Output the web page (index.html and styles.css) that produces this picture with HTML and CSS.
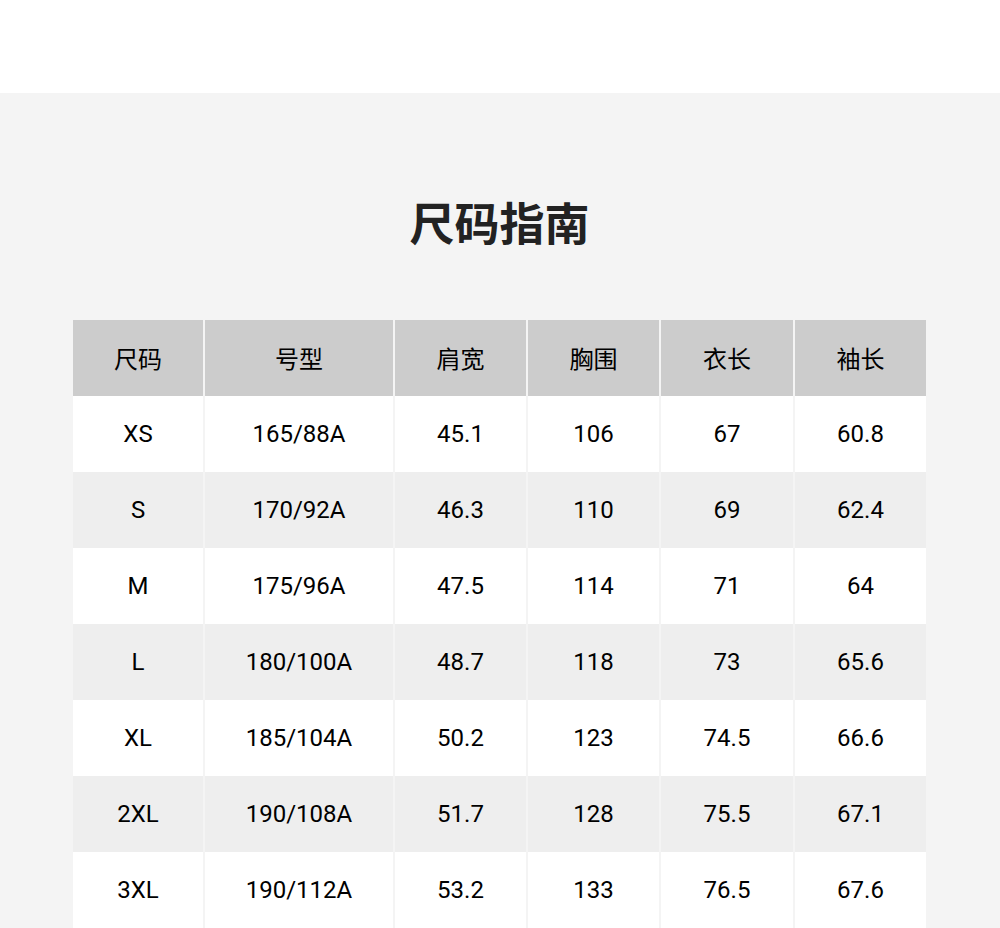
FILE: index.html
```html
<!DOCTYPE html>
<html lang="zh-CN">
<head>
<meta charset="utf-8">
<title>尺码指南</title>
<link rel="stylesheet" href="styles.css">
</head>
<body>
<div class="top"></div>
<section class="guide">
  <h1 class="title">尺码指南</h1>
  <table class="size-table">
    <colgroup>
      <col class="c1"><col class="c2"><col class="c3"><col class="c4"><col class="c5"><col class="c6">
    </colgroup>
    <thead>
      <tr><th>尺码</th><th>号型</th><th>肩宽</th><th>胸围</th><th>衣长</th><th>袖长</th></tr>
    </thead>
    <tbody>
      <tr><td>XS</td><td>165/88A</td><td>45.1</td><td>106</td><td>67</td><td>60.8</td></tr>
      <tr><td>S</td><td>170/92A</td><td>46.3</td><td>110</td><td>69</td><td>62.4</td></tr>
      <tr><td>M</td><td>175/96A</td><td>47.5</td><td>114</td><td>71</td><td>64</td></tr>
      <tr><td>L</td><td>180/100A</td><td>48.7</td><td>118</td><td>73</td><td>65.6</td></tr>
      <tr><td>XL</td><td>185/104A</td><td>50.2</td><td>123</td><td>74.5</td><td>66.6</td></tr>
      <tr><td>2XL</td><td>190/108A</td><td>51.7</td><td>128</td><td>75.5</td><td>67.1</td></tr>
      <tr><td>3XL</td><td>190/112A</td><td>53.2</td><td>133</td><td>76.5</td><td>67.6</td></tr>
    </tbody>
  </table>
</section>
</body>
</html>
```

FILE: styles.css
```css
html, body {
  margin: 0;
  padding: 0;
  background: #f4f4f4;
  font-family: Roboto, "Noto Sans CJK SC", sans-serif;
}
.top {
  height: 93px;
  background: #ffffff;
}
.guide {
  background: #f4f4f4;
  padding: 99px 74px 0 73px;
  height: 835px;
  box-sizing: border-box;
  overflow: hidden;
}
.title {
  margin: 0;
  height: 60px;
  line-height: 60px;
  text-align: center;
  font-size: 45px;
  font-weight: 600;
  color: #222222;
  font-family: "Noto Sans CJK SC", sans-serif;
}
.size-table {
  margin-top: 68px;
  width: 853px;
  border-collapse: collapse;
  table-layout: fixed;
}
.c1 { width: 131px; }
.c2 { width: 190px; }
.c3 { width: 133px; }
.c4 { width: 133px; }
.c5 { width: 134px; }
.c6 { width: 132px; }
.size-table th,
.size-table td {
  height: 75px;
  padding: 0 0 1px;
  text-align: center;
  vertical-align: middle;
  font-size: 24px;
  line-height: 28px;
  color: #000000;
  border-left: 2px solid #f4f4f4;
}
.size-table th:first-child,
.size-table td:first-child {
  border-left: none;
}
.size-table th {
  background: #cccccc;
  font-weight: 400;
  font-family: "Noto Sans CJK SC", sans-serif;
}
.size-table tbody tr:nth-child(odd) td {
  background: #ffffff;
}
.size-table tbody tr:nth-child(even) td {
  background: #eeeeee;
}
```
